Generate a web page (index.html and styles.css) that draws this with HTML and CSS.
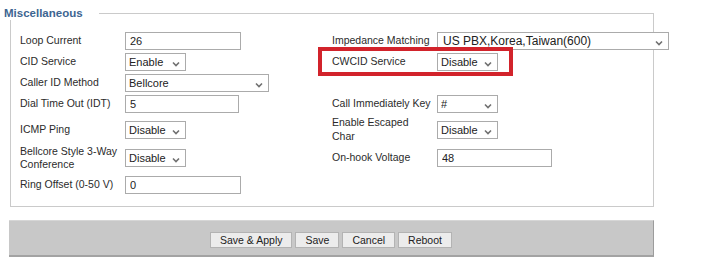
FILE: index.html
```html
<!DOCTYPE html>
<html>
<head>
<meta charset="utf-8">
<link rel="stylesheet" href="styles.css">
</head>
<body>
<fieldset class="misc">
  <legend class="misc-title">Miscellaneous</legend>
  <div class="form-grid">
    <label class="lbl">Loop Current</label>
    <div class="ctl"><input class="txt in-a" type="text" value="26"></div>
    <label class="lbl">Impedance Matching</label>
    <div class="ctl"><select class="sel sel-wide"><option>US PBX,Korea,Taiwan(600)</option></select></div>

    <label class="lbl">CID Service</label>
    <div class="ctl"><select class="sel sel-short"><option>Enable</option></select></div>
    <label class="lbl lbl-marked">CWCID Service<span class="mark"></span></label>
    <div class="ctl"><select class="sel sel-short"><option>Disable</option></select></div>

    <label class="lbl">Caller ID Method</label>
    <div class="ctl"><select class="sel sel-mid"><option>Bellcore</option></select></div>
    <div class="empty"></div>
    <div class="empty"></div>

    <label class="lbl">Dial Time Out (IDT)</label>
    <div class="ctl"><input class="txt in-b" type="text" value="5"></div>
    <label class="lbl">Call Immediately Key</label>
    <div class="ctl"><select class="sel sel-short"><option>#</option></select></div>

    <label class="lbl">ICMP Ping</label>
    <div class="ctl"><select class="sel sel-short"><option>Disable</option></select></div>
    <label class="lbl">Enable Escaped<br>Char</label>
    <div class="ctl"><select class="sel sel-short"><option>Disable</option></select></div>

    <label class="lbl">Bellcore Style 3-Way<br>Conference</label>
    <div class="ctl"><select class="sel sel-short"><option>Disable</option></select></div>
    <label class="lbl">On-hook Voltage</label>
    <div class="ctl"><input class="txt in-c" type="text" value="48"></div>

    <label class="lbl">Ring Offset (0-50 V)</label>
    <div class="ctl"><input class="txt in-a" type="text" value="0"></div>
    <div class="empty"></div>
    <div class="empty"></div>
  </div>
</fieldset>
<div class="action-bar">
  <button class="btn" type="button">Save &amp; Apply</button>
  <button class="btn" type="button">Save</button>
  <button class="btn" type="button">Cancel</button>
  <button class="btn" type="button">Reboot</button>
</div>
</body>
</html>
```
FILE: styles.css
```css
html, body {
  margin: 0;
  padding: 0;
  background: #ffffff;
}

body {
  font-family: "Liberation Sans", Arial, sans-serif;
  color: #2b2b2b;
  width: 706px;
  height: 265px;
  overflow: hidden;
}

.misc {
  margin: 6px 0 0 10px;
  width: 644px;
  box-sizing: border-box;
  padding: 10px 0 8px 9px;
  border: 1px solid #cacaca;
  min-width: 0;
}

.misc-title {
  margin-left: -16px;
  padding: 0 16px 0 0;
  font-size: 11.5px;
  line-height: 14px;
  font-weight: bold;
  color: #3d6591;
}

.form-grid {
  display: grid;
  grid-template-columns: 105px 207px 105px 1fr;
  grid-template-rows: 21px 21px 21px 22px 29px 28px 26px;
  align-items: center;
}

.lbl {
  font-size: 10.5px;
  line-height: 13.5px;
  white-space: nowrap;
  color: #2b2b2b;
}

.lbl-marked {
  position: relative;
}

.mark {
  position: absolute;
  left: -14px;
  top: -8px;
  width: 195px;
  height: 29px;
  box-sizing: border-box;
  border: 4px solid #d2232b;
  pointer-events: none;
}

.ctl {
  display: flex;
  align-items: center;
}

.txt {
  height: 18px;
  box-sizing: border-box;
  border: 1px solid #ababab;
  padding: 0 4px;
  margin: 0;
  font-family: "Liberation Sans", Arial, sans-serif;
  font-size: 11px;
  color: #222;
  background: #fff;
  outline: none;
}

.in-a { width: 116px; }
.in-b { width: 114px; }
.in-c { width: 115px; }

.sel {
  -webkit-appearance: none;
  appearance: none;
  height: 18px;
  box-sizing: border-box;
  border: 1px solid #ababab;
  border-radius: 0;
  padding: 0 14px 0 3px;
  margin: 0;
  font-family: "Liberation Sans", Arial, sans-serif;
  font-size: 11px;
  color: #222;
  background-color: #fff;
  background-image: url("data:image/svg+xml,%3Csvg xmlns='http://www.w3.org/2000/svg' width='8' height='6' viewBox='0 0 8 6'%3E%3Cpolyline points='1,1.5 4,4.5 7,1.5' fill='none' stroke='%23707070' stroke-width='1.6'/%3E%3C/svg%3E");
  background-repeat: no-repeat;
  background-position: right 5px top 7px;
  outline: none;
}

.sel-short { width: 61px; }
.sel-mid { width: 144px; }
.sel-wide { width: 232px; font-size: 12px; padding-left: 5px; }

.action-bar {
  margin: 13px 0 0 9px;
  width: 645px;
  height: 37px;
  box-sizing: border-box;
  background: #c8c8c8;
  border-top: 1px solid #d6d6d6;
  border-right: 1px solid #9c9c9c;
  border-bottom: 2px solid #a3a3a3;
  display: flex;
  justify-content: center;
  align-items: flex-start;
  gap: 3px;
  padding-top: 11px;
}

.btn {
  height: 16px;
  box-sizing: border-box;
  margin: 0;
  padding: 0 9px;
  border: 1px solid #b3b3b3;
  border-radius: 0;
  background: #ececec;
  font-family: "Liberation Sans", Arial, sans-serif;
  font-size: 10.5px;
  line-height: 13px;
  color: #222;
}
```
